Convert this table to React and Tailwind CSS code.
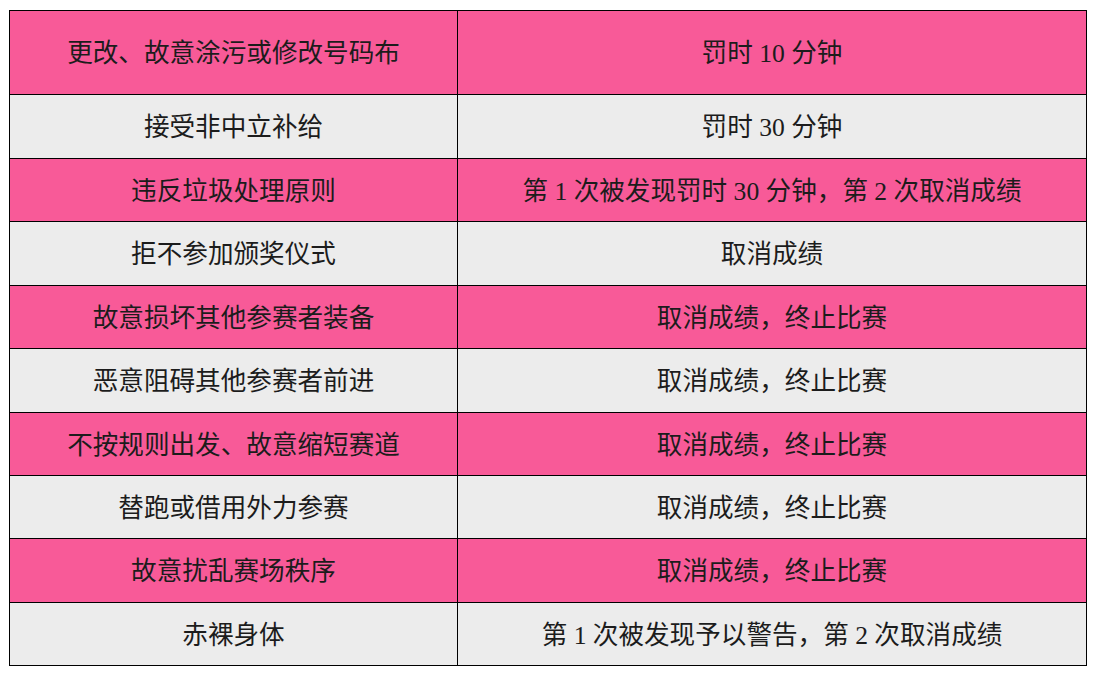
import React from 'react'

const rows = [
    ['更改、故意涂污或修改号码布', '罚时 10 分钟', 'h-[84px]', true],
    ['接受非中立补给', '罚时 30 分钟', 'h-[64px]', false],
    ['违反垃圾处理原则', '第 1 次被发现罚时 30 分钟，第 2 次取消成绩', 'h-[63px]', true],
    ['拒不参加颁奖仪式', '取消成绩', 'h-[64px]', false],
    ['故意损坏其他参赛者装备', '取消成绩，终止比赛', 'h-[63px]', true],
    ['恶意阻碍其他参赛者前进', '取消成绩，终止比赛', 'h-[64px]', false],
    ['不按规则出发、故意缩短赛道', '取消成绩，终止比赛', 'h-[63px]', true],
    ['替跑或借用外力参赛', '取消成绩，终止比赛', 'h-[63px]', false],
    ['故意扰乱赛场秩序', '取消成绩，终止比赛', 'h-[64px]', true],
    ['赤裸身体', '第 1 次被发现予以警告，第 2 次取消成绩', 'h-[63px]', false],
]

const App = () => {
    return (
        <div className='w-[1093px] h-[678px] bg-white pt-[10px] pl-[9px]'>
            <div
                className='w-[1078px] border-t border-l border-black text-[25.6px] text-[#1c1c1c]'
                style={{ fontFamily: '"Liberation Serif", "Noto Sans CJK SC", serif' }}
            >
                {rows.map(([rule, penalty, h, pink], i) => (
                    <div key={i} className={`flex ${h} ${pink ? 'bg-[#f85a98]' : 'bg-[#ececec]'}`}>
                        <div className='w-[448px] flex items-center justify-center pt-1 border-r border-b border-black'>
                            {rule}
                        </div>
                        <div className='flex-1 flex items-center justify-center pt-1 border-r border-b border-black'>
                            {penalty}
                        </div>
                    </div>
                ))}
            </div>
        </div>
    )
}

export default App
